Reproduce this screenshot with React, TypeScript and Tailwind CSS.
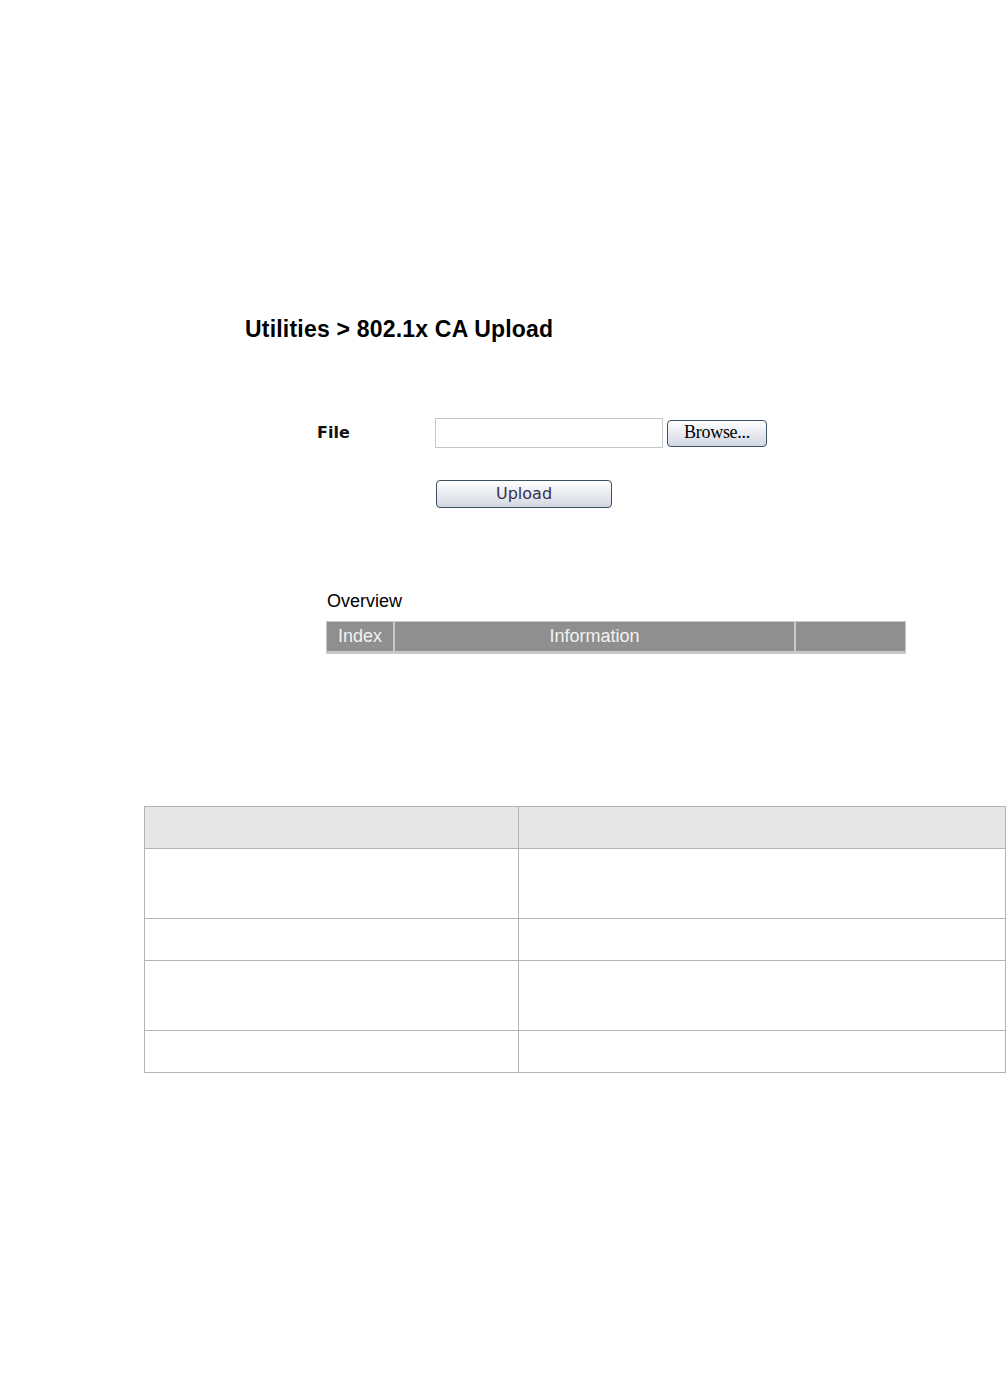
export default function App() {
  const rows = [70, 42, 70, 42];
  return (
    <div className="min-h-[1373px] w-[1008px] bg-white pt-[318px] font-['Liberation_Sans',Arial,sans-serif]">
      {/* page title */}
      <h1 className="ml-[245px] text-[23px] leading-[23px] font-bold tracking-[0.2px] text-black">
        Utilities &gt; 802.1x CA Upload
      </h1>

      {/* upload form */}
      <div className="mt-[77px] flex items-center">
        <label className="ml-[317px] w-[118px] font-['DejaVu_Sans',Verdana,sans-serif] text-[16px] font-bold text-[#111]">
          File
        </label>
        <div className="h-[30px] w-[228px] border border-[#c3c6ca] bg-white" />
        <button className="ml-[4px] h-[27px] w-[100px] rounded-[4px] border border-[#3c4f63] bg-gradient-to-b from-white to-[#d3d7e3] pb-[2px] font-['Liberation_Serif','Times_New_Roman',serif] text-[18px] leading-[20px] tracking-[-0.3px] text-black">
          Browse...
        </button>
      </div>
      <div className="mt-[32px] ml-[436px]">
        <button className="h-[28px] w-[176px] rounded-[4px] border border-[#3c4f63] bg-gradient-to-b from-white to-[#d3d7e3] font-['DejaVu_Sans',Verdana,sans-serif] text-[16px] leading-[20px] text-[#3a2f4a]">
          Upload
        </button>
      </div>

      {/* overview */}
      <div className="mt-[84px] ml-[327px] text-[18px] leading-[18px] text-black">Overview</div>
      <div className="mt-[11px] ml-[326px] flex w-[580px] gap-[2px] border border-b-[3px] border-[#c8c8c8] bg-[#c8c8c8] text-[18px] leading-[29px] text-[#f2f2f2]">
        <div className="h-[29px] w-[66px] bg-[#8f8f8f] text-center">Index</div>
        <div className="h-[29px] w-[399px] bg-[#8f8f8f] text-center">Information</div>
        <div className="h-[29px] flex-1 bg-[#8f8f8f]" />
      </div>

      {/* description table */}
      <table className="mt-[152px] ml-[144px] w-[862px] border-collapse">
        <tbody>
          <tr className="h-[42px] bg-[#e6e6e6]">
            <td className="w-[374px] border border-[#b4b4b4]" />
            <td className="border border-[#b4b4b4]" />
          </tr>
          {rows.map((h, i) => (
            <tr key={i} style={{ height: h }}>
              <td className="border border-[#b4b4b4]" />
              <td className="border border-[#b4b4b4]" />
            </tr>
          ))}
        </tbody>
      </table>
    </div>
  );
}
